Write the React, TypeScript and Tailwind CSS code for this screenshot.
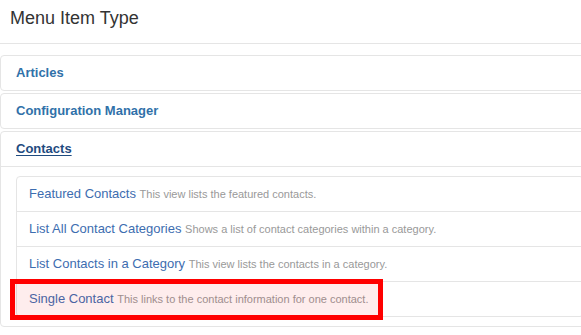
import React from "react";

const groups = ["Articles", "Configuration Manager"];

const items = [
  { title: "Featured Contacts", desc: "This view lists the featured contacts." },
  { title: "List All Contact Categories", desc: "Shows a list of contact categories within a category." },
  { title: "List Contacts in a Category", desc: "This view lists the contacts in a category." },
  { title: "Single Contact", desc: "This links to the contact information for one contact." },
];

export default function App() {
  return (
    <div
      className="relative w-[581px] h-[335px] overflow-hidden bg-white"
      style={{ fontFamily: '"Liberation Sans", Arial, sans-serif' }}
    >
      <div className="h-[44px] border-b border-[#e5e5e5] pl-[10px] pt-[6px]">
        <h3 className="text-[18px] leading-[24px] text-[#333] font-normal">Menu Item Type</h3>
      </div>
      <div className="mt-[11px] w-[600px]">
        {groups.map((g) => (
          <div key={g} className="mb-[2px] rounded-[4px] border border-[#e5e5e5]">
            <div className="px-[15px] py-[8px] text-[13px] leading-[18px] font-bold text-[#3071a9]">{g}</div>
          </div>
        ))}
        <div className="mb-[2px] rounded-[4px] border border-[#e5e5e5]">
          <div className="px-[15px] py-[8px] text-[13px] leading-[18px] font-bold text-[#1f4b7f] underline underline-offset-[2px]">
            Contacts
          </div>
          <div className="border-t border-[#e5e5e5] px-[15px] py-[9px]">
            <ul className="rounded-[4px] border border-[#e5e5e5]">
              {items.map((it, i) => (
                <li
                  key={it.title}
                  className={
                    i > 0
                      ? "h-[35px] border-t border-[#e5e5e5] px-[12px] pt-[8px] text-[13px] leading-[18px]"
                      : "h-[34px] px-[12px] pt-[8px] text-[13px] leading-[18px]"
                  }
                >
                  <span className="text-[13px] text-[#3d6db0]">{it.title}</span>{" "}
                  <span className="text-[11px] text-[#999]">{it.desc}</span>
                </li>
              ))}
            </ul>
          </div>
        </div>
      </div>
      <div className="absolute left-[10px] top-[279px] w-[373px] h-[41px] border-[5px] border-[#ff0000] bg-[rgba(240,0,0,0.07)]" />
    </div>
  );
}
